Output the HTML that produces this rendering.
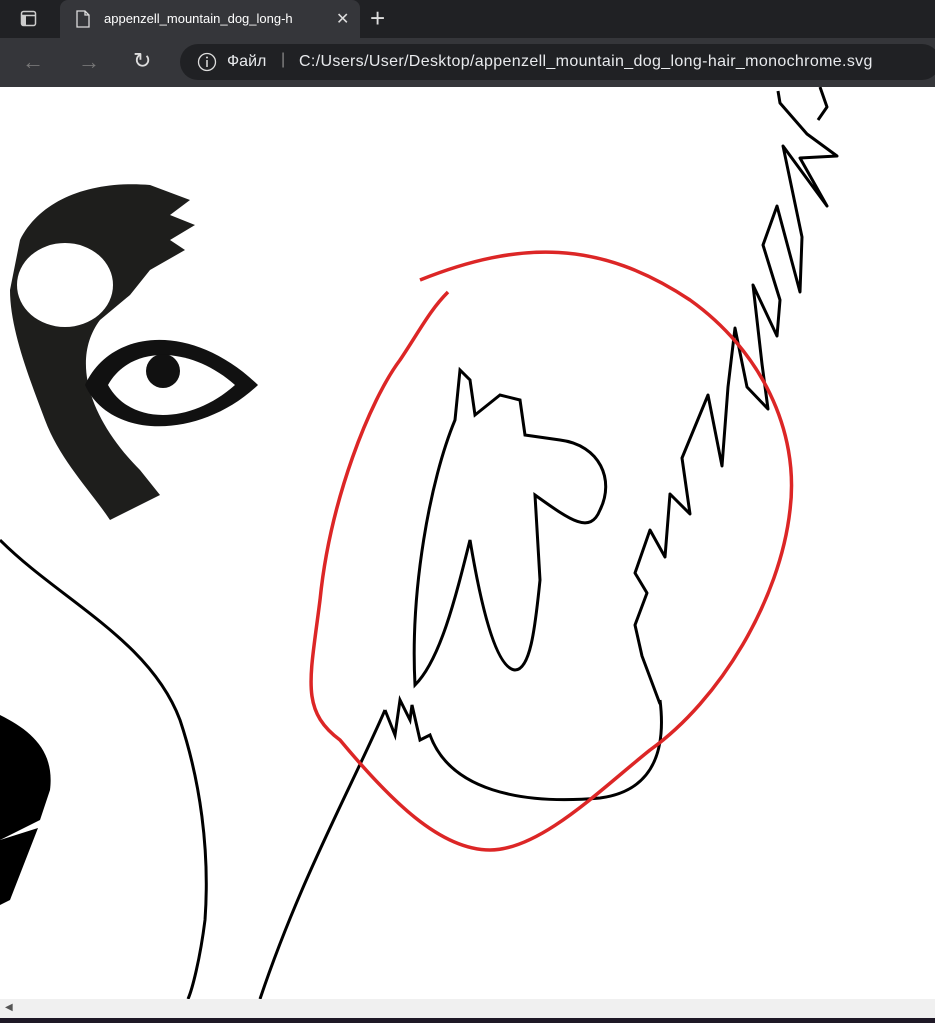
<!DOCTYPE html>
<html><head><style>
body{margin:0;width:935px;height:1023px;overflow:hidden;background:#fff;font-family:"Liberation Sans",sans-serif;position:relative}
.top{position:absolute;left:0;top:0;width:935px;height:38px;background:#202124}
.tab{position:absolute;left:60px;top:0;width:300px;height:38px;background:#35363a;border-radius:8px 8px 0 0;color:#fff;font-size:13px}
.bar{position:absolute;left:0;top:38px;width:935px;height:49px;background:#35363a}
.addr{position:absolute;left:180px;top:6px;width:760px;height:36px;background:#202124;border-radius:18px;color:#e8eaed;font-size:16px}
.sb{position:absolute;left:0;top:999px;width:935px;height:19px;background:#f0f0f0}
.bot{position:absolute;left:0;top:1018px;width:935px;height:5px;background:#1e1826}
</style></head><body>
<div class="top">
<svg style="position:absolute;left:20px;top:10px" width="18" height="18"><rect x="1.5" y="1.5" width="14" height="14" rx="2" fill="none" stroke="#ccc" stroke-width="1.5"/><line x1="1.5" y1="5.5" x2="15.5" y2="5.5" stroke="#ccc" stroke-width="1.5"/><rect x="2" y="5" width="4" height="10" fill="#ccc"/></svg>
<div class="tab">
<svg style="position:absolute;left:16px;top:10px" width="14" height="18"><path d="M1 1h8l4 4v12H1z M9 1v4h4" fill="none" stroke="#ddd" stroke-width="1.3"/></svg>
<span style="position:absolute;left:44px;top:11px;width:232px;overflow:hidden;white-space:nowrap">appenzell_mountain_dog_long-h</span>
<span style="position:absolute;left:276px;top:9px;font-size:16px;color:#ddd">✕</span>
</div>
<span style="position:absolute;left:370px;top:3px;font-size:26px;color:#ddd;font-weight:200">+</span>
</div>
<div class="bar">
<span style="position:absolute;left:22px;top:11px;font-size:22px;color:#777">←</span>
<span style="position:absolute;left:78px;top:11px;font-size:22px;color:#777">→</span>
<span style="position:absolute;left:133px;top:10px;font-size:22px;color:#ddd">↻</span>
<div class="addr">
<svg style="position:absolute;left:17px;top:8px" width="20" height="20"><circle cx="10" cy="10" r="8.5" fill="none" stroke="#ddd" stroke-width="1.3"/><line x1="10" y1="8" x2="10" y2="15" stroke="#ddd" stroke-width="1.5"/><circle cx="10" cy="5.5" r="1" fill="#ddd"/></svg>
<span style="position:absolute;left:47px;top:9px">Файл</span>
<span style="position:absolute;left:101px;top:7px;color:#888">|</span>
<span style="position:absolute;left:119px;top:9px;letter-spacing:0.35px">C:/Users/User/Desktop/appenzell_mountain_dog_long-hair_monochrome.svg</span>
</div>
</div>
<svg style="position:absolute;left:0;top:87px" width="935" height="912" viewBox="0 87 935 912">
<path d="M20 240 C40 200 90 180 150 185 L190 200 L170 215 L195 225 L170 240 L185 250 L150 270 L130 295 L100 320 C70 360 90 420 140 470 L160 495 L110 520 C90 490 60 460 45 420 C30 380 10 330 10 290 Z" fill="#1e1e1c"/>
<ellipse cx="65" cy="285" rx="48" ry="42" fill="#fff"/>
<path d="M85 385 C110 330 190 320 258 385 C200 440 110 440 85 385 Z" fill="#111"/>
<path d="M108 385 C130 345 190 345 235 385 C190 425 130 425 108 385 Z" fill="#fff"/>
<circle cx="163" cy="371" r="17" fill="#111"/>
<path d="M0 540 C60 600 150 640 180 720 C200 780 210 850 205 920 C200 960 192 990 188 999" fill="none" stroke="#000" stroke-width="3"/>
<path d="M0 715 C30 730 55 750 50 790 L40 820 L0 840 Z" fill="#000"/>
<path d="M0 840 L38 828 L10 900 L0 905 Z" fill="#000"/>
<path d="M260 999 C300 880 350 790 385 710" fill="none" stroke="#000" stroke-width="3"/>
<path d="M385 710 L395 735 L400 700 L410 720 L412 705 L420 740 L430 735 C450 790 520 805 600 798 C660 790 665 740 660 700" fill="none" stroke="#000" stroke-width="3"/>
<polyline points="660,704 642,656 635,625 647,593 635,573 650,530 665,557 670,494 690,514 682,458 708,395 722,466 728,387 735,328 747,387 768,409 762,364 753,285 777,336 780,300 763,245 777,206 800,292 802,237 783,146 827,206 800,158 837,156 807,134 780,103 778,91" fill="none" stroke="#000" stroke-width="3" stroke-linejoin="round"/>
<polyline points="820,87 827,107 818,120" fill="none" stroke="#000" stroke-width="3" stroke-linejoin="round"/>
<path d="M415 685 C410 590 430 480 455 420 L460 370 L470 380 L475 415 L500 395 L520 400 L525 435 L560 440 C600 445 615 480 600 510 C590 535 570 520 535 495 L540 580 C535 630 530 670 515 670 C495 668 480 600 470 540 C455 600 440 660 415 685 Z" fill="none" stroke="#000" stroke-width="3"/>
<path d="M420 280 C520 240 600 240 690 300 C760 350 800 430 790 510 C780 600 720 700 650 750 C600 790 540 850 490 850 C440 850 390 800 340 740 C300 710 310 680 320 600 C330 500 370 400 400 360 C420 330 430 310 448 292" fill="none" stroke="#dc2626" stroke-width="3.5"/>
</svg>
<div class="sb"><span style="position:absolute;left:5px;top:3px;font-size:10px;color:#555">◀</span></div>
<div class="bot"></div>
</body></html>
